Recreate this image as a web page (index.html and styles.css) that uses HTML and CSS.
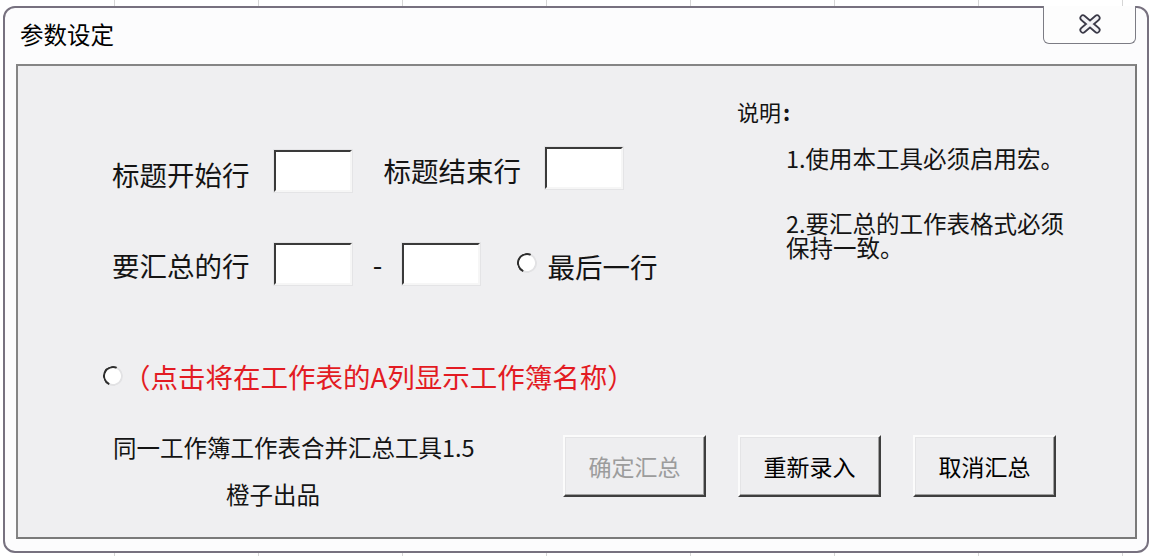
FILE: index.html
```html
<!DOCTYPE html>
<html lang="zh-CN">
<head>
<meta charset="utf-8">
<title>参数设定</title>
<link rel="stylesheet" href="styles.css">
</head>
<body>
<div class="window">
  <div class="titlebar">
    <div class="title">参数设定</div>
    <div class="close">
      <svg width="26" height="22" viewBox="0 0 26 22">
        <path d="M6 5 L20 17 M20 5 L6 17" stroke="#3b3a48" stroke-width="7" stroke-linecap="round" fill="none"/>
        <path d="M6 5 L20 17 M20 5 L6 17" stroke="#f3f3f6" stroke-width="3.6" stroke-linecap="round" fill="none"/>
      </svg>
    </div>
  </div>
  <div class="panel">
    <div class="top">
      <div class="form">
        <div class="row row1">
          <span class="label label-a">标题开始行</span>
          <input class="box box-a" type="text">
          <span class="label label-b">标题结束行</span>
          <input class="box box-b" type="text">
        </div>
        <div class="row row2">
          <span class="label label-a">要汇总的行</span>
          <input class="box box-a" type="text">
          <span class="dash">-</span>
          <input class="box box-c" type="text">
          <span class="radio radio-a"></span>
          <span class="label label-c">最后一行</span>
        </div>
        <div class="row row3">
          <span class="radio"></span>
          <span class="red">（点击将在工作表的A列显示工作簿名称）</span>
        </div>
      </div>
      <div class="notes">
        <div class="notes-head">说明<b>:</b></div>
        <div class="note note1">1.使用本工具必须启用宏。</div>
        <div class="note note2">2.要汇总的工作表格式必须<br>保持一致。</div>
      </div>
    </div>
    <div class="bottom">
      <div class="credits">
        <div class="credit1">同一工作簿工作表合并汇总工具1.5</div>
        <div class="credit2">橙子出品</div>
      </div>
      <div class="buttons">
        <div class="btn btn-disabled">确定汇总</div>
        <div class="btn">重新录入</div>
        <div class="btn">取消汇总</div>
      </div>
    </div>
  </div>
</div>
</body>
</html>
```
FILE: styles.css
```css
html, body {
  margin: 0;
  padding: 0;
}
body {
  width: 1152px;
  height: 556px;
  overflow: hidden;
  background-color: #ffffff;
  background-image: repeating-linear-gradient(90deg, transparent 0 114px, #d6d6d6 114px 115px, transparent 115px 144px);
  font-family: "Noto Sans CJK SC", sans-serif;
  color: #141414;
}
.window {
  box-sizing: border-box;
  margin: 6px 0 0 3px;
  width: 1146px;
  height: 547px;
  border: 2px solid #77717f;
  border-radius: 12px;
  background: #fcfcfd;
  display: flex;
  flex-direction: column;
}
.titlebar {
  height: 56px;
  display: flex;
  justify-content: space-between;
  align-items: flex-start;
}
.title {
  font-size: 23.5px;
  line-height: 28px;
  padding: 12px 0 0 15px;
  color: #000;
}
.close {
  box-sizing: border-box;
  margin: -2px 11px 0 0;
  width: 93px;
  height: 38px;
  border: 1px solid #7c7c84;
  border-top: none;
  border-radius: 0 0 6px 6px;
  background: #fdfdfd;
  display: flex;
  justify-content: center;
  align-items: center;
}
.close svg {
  display: block;
  margin-top: -1px;
}
.panel {
  box-sizing: border-box;
  margin: 0 10px 0 11px;
  width: 1121px;
  height: 475px;
  border: 2px solid #858585;
  border-right-color: #7a7a7a;
  border-bottom-color: #7a7a7a;
  background: #efeff1;
  display: flex;
  flex-direction: column;
}
.top {
  display: grid;
  grid-template-columns: 719px 1fr;
}
.form {
  display: flex;
  flex-direction: column;
}
.row {
  display: flex;
  align-items: center;
  height: 42px;
}
.row1 {
  margin-top: 84px;
  padding-left: 94px;
}
.row2 {
  margin-top: 51px;
  padding-left: 94px;
}
.row3 {
  margin-top: 72px;
  height: 40px;
  padding-left: 85px;
}
.label {
  font-size: 27.5px;
  line-height: 1;
  white-space: nowrap;
}
.row1 .label-a {
  margin-top: 7px;
}
.row2 .label-a {
  margin-top: 4px;
}
.label-b {
  margin-left: 32px;
}
.label-c {
  margin-left: 11px;
  margin-top: 6px;
}
.box {
  box-sizing: border-box;
  width: 78px;
  height: 42px;
  margin: 0;
  padding: 0;
  background: #ffffff;
  border: 2px solid;
  border-color: #3a3a3a #f6f6f6 #f6f6f6 #3a3a3a;
  box-shadow: 0 0 0 1px #e4e4e6;
  outline: none;
}
.box-a {
  margin-left: 24px;
}
.box-b {
  margin-left: 24px;
  margin-bottom: 6px;
}
.box-c {
  margin-left: 19px;
}
.dash {
  width: 10px;
  margin-left: 21px;
  font-size: 27.5px;
  line-height: 1;
  text-align: center;
  margin-top: 2px;
}
.radio {
  box-sizing: border-box;
  width: 20px;
  height: 20px;
  border-radius: 50%;
  background: #ffffff;
  border: 2px solid;
  border-color: #2e2e2e #e2e2e4 #e2e2e4 #2e2e2e;
  transform: rotate(-20deg);
  flex: none;
  margin-bottom: 2px;
}
.radio-a {
  margin-left: 37px;
}
.red {
  margin-left: 0;
  font-size: 27.5px;
  line-height: 1;
  color: #e31b23;
  white-space: nowrap;
}
.notes {
  display: flex;
  flex-direction: column;
  padding-top: 32px;
}
.notes-head {
  font-size: 22px;
  line-height: 26px;
}
.notes-head b {
  font-weight: 700;
  margin-left: 2px;
}
.note {
  font-size: 23.5px;
  line-height: 24px;
  padding-left: 49px;
  white-space: nowrap;
}
.note1 {
  margin-top: 22px;
}
.note2 {
  margin-top: 41px;
}
.bottom {
  display: flex;
  align-items: flex-start;
  margin-top: 38px;
}
.credits {
  box-sizing: border-box;
  width: 545px;
  padding-left: 95px;
  font-size: 23.5px;
  line-height: 24px;
  white-space: nowrap;
}
.credit2 {
  margin-top: 23px;
  margin-left: 113px;
}
.buttons {
  display: flex;
  gap: 32px;
}
.btn {
  box-sizing: border-box;
  width: 143px;
  height: 62px;
  border: 2px solid;
  border-color: #fbfbfb #3e3e3e #3e3e3e #fbfbfb;
  box-shadow: inset -1px -1px 0 #a0a0a0, inset 1px 1px 0 #e4e4e6;
  background: #eeeef0;
  font-size: 23px;
  display: flex;
  justify-content: center;
  align-items: center;
  color: #000;
}
.btn-disabled {
  color: #9c9c9c;
}
```
